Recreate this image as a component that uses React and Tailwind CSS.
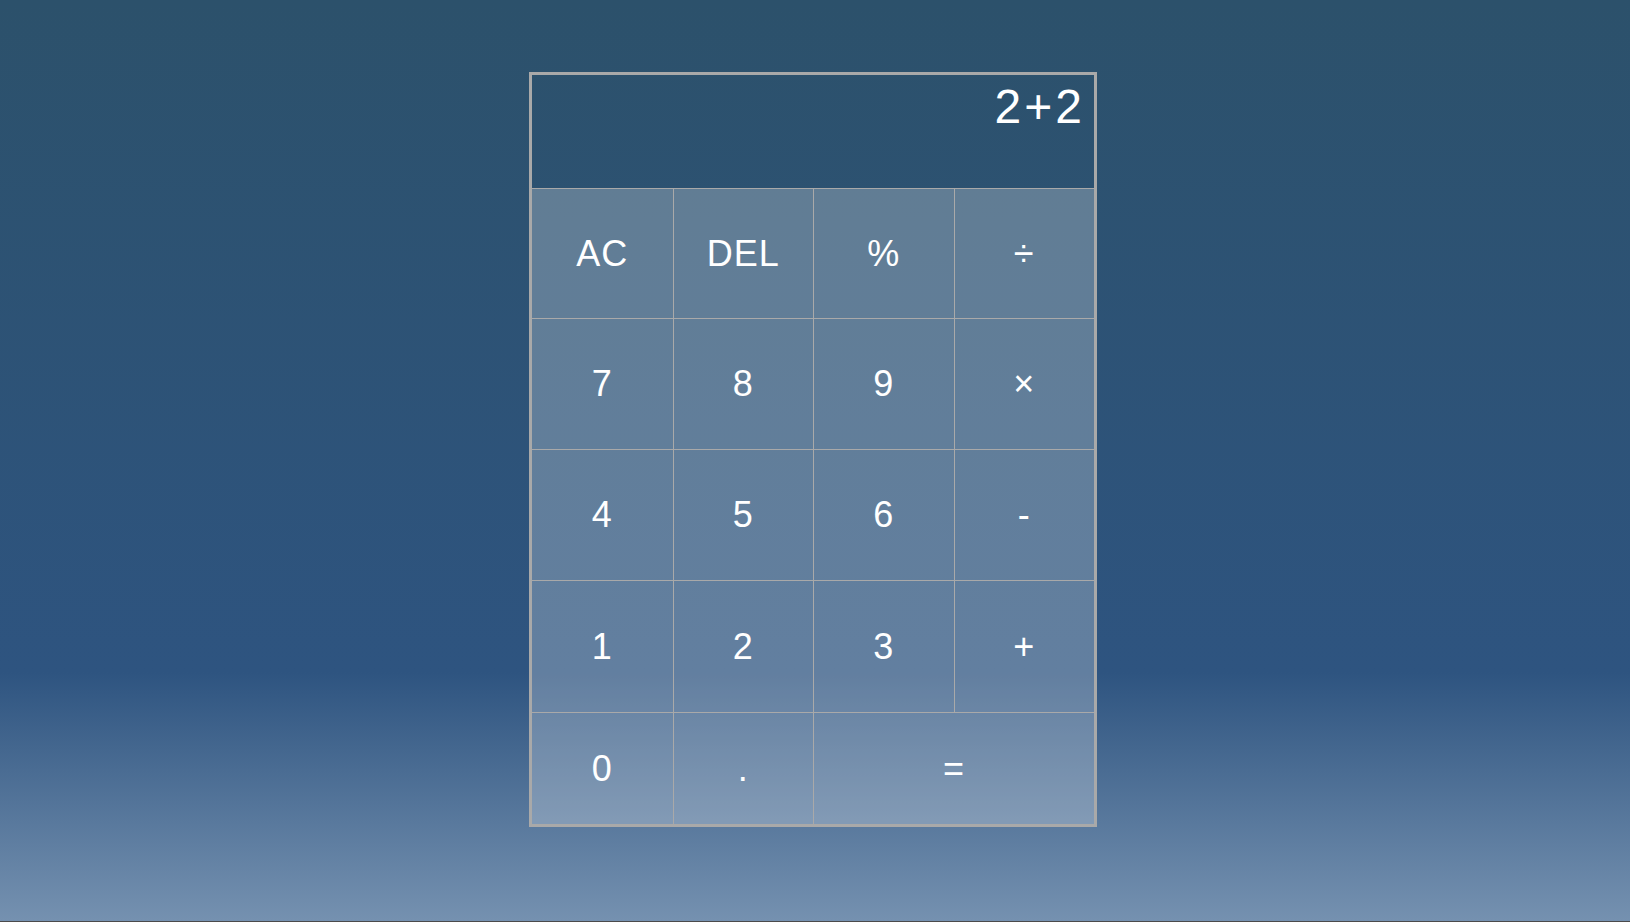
import React from "react";

// ─── Keypad layout ─────────────────────────────────────────────────────────────
const KEYS = [
  ["AC", "DEL", "%", "÷"],
  ["7", "8", "9", "×"],
  ["4", "5", "6", "-"],
  ["1", "2", "3", "+"],
  ["0", ".", "="],
];

const ROW_HEIGHTS = ["h-[130px]", "h-[131px]", "h-[131px]", "h-[132px]", "h-[112px]"];

function Key({ label, first, wide, height }) {
  return (
    <button
      className={[
        "flex items-center justify-center bg-white/25 text-white text-4xl tracking-[1px] border-t border-[#a9a9a9]",
        first ? "" : "border-l",
        wide ? "col-span-2" : "",
        height,
      ].join(" ")}
    >
      {label}
    </button>
  );
}

export default function App() {
  return (
    <div className="h-[922px] w-full border-b border-[#4b4b4b] bg-[linear-gradient(to_bottom,#2c516b_0%,#2e5480_73%,#7591b0_100%)] font-['Liberation_Sans',Arial,sans-serif]">
      <div className="flex justify-center pt-[72px] pr-[4px]">
        <div className="w-[568px] border-[3px] border-[#a9a9a9]">
          {/* Display */}
          <div className="h-[113px] flex justify-end items-start pt-[8px] pr-[9px]">
            <span className="text-white text-5xl leading-none tracking-[3px]">2+2</span>
          </div>

          {/* Keys */}
          <div className="grid grid-cols-4">
            {KEYS.map((row, r) =>
              row.map((k, c) => (
                <Key
                  key={k}
                  label={k}
                  first={c === 0}
                  wide={k === "="}
                  height={ROW_HEIGHTS[r]}
                />
              ))
            )}
          </div>
        </div>
      </div>
    </div>
  );
}
